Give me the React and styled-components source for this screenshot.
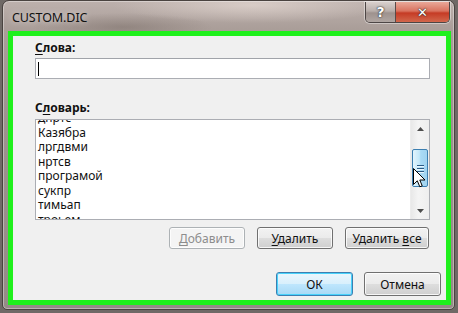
import React from "react"
import styled, { createGlobalStyle } from "styled-components"

const words = ["дпртс", "Казябра", "лргдвми", "нртсв", "програмой", "сукпр", "тимьап", "троьем"]

const GlobalStyle = createGlobalStyle`
  html, body {
    margin: 0;
    padding: 0;
    width: 458px;
    height: 313px;
    overflow: hidden;
    background: #6f6966;
  }
  * { box-sizing: border-box; }
`

const Page = styled.div`
  width: 458px;
  height: 313px;
  padding: 0 3px 3px 2px;
  font-family: "Noto Sans", "Open Sans", sans-serif;
`

const Window = styled.div`
  height: 310px;
  display: flex;
  flex-direction: column;
  border: 1px solid #4a4340;
  border-radius: 7px 7px 5px 5px;
  padding: 0 3px 4px 5px;
  background:
    radial-gradient(ellipse 140px 18px at 250px 4px, rgba(226, 214, 208, 0.75), transparent),
    radial-gradient(ellipse 90px 14px at 120px 26px, rgba(120, 108, 102, 0.5), transparent),
    linear-gradient(180deg, #bdb1ad 0%, #aa9e99 9%, #9d928e 40%, #958b87 100%);
  box-shadow: inset 0 0 0 1px rgba(255, 255, 255, 0.35);
`

const TitleBar = styled.div`
  height: 30px;
  display: flex;
  align-items: flex-start;
  justify-content: space-between;
`

const Title = styled.div`
  padding: 8px 0 0 4px;
  font-size: 12.5px;
  color: #111;
  letter-spacing: -0.1px;
  text-shadow: 0 0 6px rgba(255, 255, 255, 0.7);
`

const Caption = styled.div`
  display: flex;
  margin: 1px 1px 0 0;
  border: 1px solid #4d4645;
  border-top: none;
  border-radius: 0 0 5px 5px;
  overflow: hidden;
  box-shadow: 0 0 0 1px rgba(255, 255, 255, 0.4);
`

const CapButton = styled.div`
  width: ${p => p.$w}px;
  height: 20px;
  display: flex;
  align-items: center;
  justify-content: center;
  font-family: "DejaVu Sans", sans-serif;
  font-weight: bold;
  font-size: ${p => (p.$close ? 13 : 14)}px;
  color: #fff;
  background: ${p =>
    p.$close
      ? "linear-gradient(180deg, #e9a899 0%, #d9735f 45%, #c53b25 55%, #d2674c 100%)"
      : "linear-gradient(180deg, #d9d0cd 0%, #b8aeaa 45%, #9e928e 55%, #b0a6a2 100%)"};
  border-left: ${p => (p.$close ? "1px solid #5a4a48" : "none")};
  text-shadow: 0 0 2px #333, 0 0 1px #000;
`

const Client = styled.div`
  flex: 1;
  border: 5px solid #1ff01c;
  background: #f0f0f0;
  padding: 4px 5px 4px 22px;
  display: flex;
  flex-direction: column;
`

const Label = styled.div`
  font-size: 12px;
  font-weight: bold;
  line-height: 16px;
  color: #111;
  margin-top: ${p => p.$top || 0}px;
  u { text-decoration-thickness: 1px; text-underline-offset: 2px; }
`

const Field = styled.div`
  margin: 2px 11px 0 0;
  height: 21px;
  background: #fff;
  border: 1px solid #abadb3;
  border-top-color: #a0a3a9;
  padding: 3px 2px;
`

const Caret = styled.div`
  width: 1px;
  height: 14px;
  background: #000;
`

const ListBox = styled.div`
  position: relative;
  margin: 3px 11px 0 0;
  height: 101px;
  background: #fff;
  border: 1px solid #abadb3;
  display: flex;
  overflow: hidden;
`

const Items = styled.div`
  flex: 1;
  padding-left: 2px;
  margin-top: -9px;
`

const Item = styled.div`
  font-size: 12px;
  line-height: 14.5px;
  color: #111;
`

const ScrollBar = styled.div`
  width: 19px;
  display: flex;
  flex-direction: column;
  align-items: center;
  background: linear-gradient(90deg, #e8e8e8, #f4f4f4 40%, #eeeeee);
  border-left: 1px solid #ececec;
`

const Arrow = styled.div`
  height: 17px;
  display: flex;
  align-items: center;
  justify-content: center;
`

const Track = styled.div`
  flex: 1;
  width: 100%;
  padding: 12px 1px 0 1px;
`

const Thumb = styled.div`
  height: 38px;
  border: 1px solid #3c7fb1;
  border-radius: 2px;
  background: linear-gradient(90deg, #e3f4fc 0%, #c4e8f9 45%, #a9daf5 55%, #a0d3f0 100%);
  display: flex;
  flex-direction: column;
  align-items: center;
  justify-content: center;
  gap: 2px;
`

const Grip = styled.div`
  width: 7px;
  height: 1px;
  background: #2b5b86;
  box-shadow: 0 1px 0 #e8f6ff;
`

const Cursor = styled.svg`
  position: absolute;
  left: 377px;
  top: 48px;
`

const Row = styled.div`
  display: flex;
  justify-content: flex-end;
  gap: ${p => p.$gap}px;
  margin: ${p => p.$margin};
`

const Button = styled.div`
  width: ${p => p.$w}px;
  height: ${p => p.$h || 22}px;
  display: flex;
  align-items: center;
  justify-content: center;
  font-size: 12px;
  color: ${p => (p.$disabled ? "#8d8d8d" : "#111")};
  border-radius: 3px;
  border: 1px solid ${p => (p.$disabled ? "#adb2b5" : p.$default ? "#3c7fb1" : "#707070")};
  background: ${p =>
    p.$disabled
      ? "#f4f4f4"
      : p.$default
      ? "linear-gradient(180deg, #eaf6fd 0%, #d9f0fc 48%, #bee6fd 52%, #a7d9f5 100%)"
      : "linear-gradient(180deg, #f2f2f2 0%, #ebebeb 48%, #dddddd 52%, #cfcfcf 100%)"};
  box-shadow: inset 0 0 0 1px ${p => (p.$default ? "#48d2fb" : "rgba(255,255,255,0.8)")};
  u { text-decoration-thickness: 1px; text-underline-offset: 2px; }
`

export default function App() {
  return (
    <>
      <GlobalStyle />
      <Page>
        <Window>
          <TitleBar>
            <Title>CUSTOM.DIC</Title>
            <Caption>
              <CapButton $w={29}>?</CapButton>
              <CapButton $w={54} $close>✕</CapButton>
            </Caption>
          </TitleBar>
          <Client>
            <Label><u>С</u>лова:</Label>
            <Field><Caret /></Field>
            <Label $top={21}>С<u>л</u>оварь:</Label>
            <ListBox>
              <Items>
                {words.map(w => (
                  <Item key={w}>{w}</Item>
                ))}
              </Items>
              <ScrollBar>
                <Arrow>
                  <svg width="7" height="4" viewBox="0 0 7 4"><path d="M0 4 L3.5 0 L7 4 Z" fill="#4d4d4d" /></svg>
                </Arrow>
                <Track>
                  <Thumb>
                    <Grip />
                    <Grip />
                    <Grip />
                  </Thumb>
                </Track>
                <Arrow>
                  <svg width="7" height="4" viewBox="0 0 7 4"><path d="M0 0 L3.5 4 L7 0 Z" fill="#4d4d4d" /></svg>
                </Arrow>
              </ScrollBar>
              <Cursor width="13" height="21" viewBox="0 0 13 21">
                <path
                  d="M0.5 0.5 L0.5 16.5 L4.3 12.8 L6.8 18.8 L9.2 17.8 L6.8 12 L12 12 Z"
                  fill="#fff"
                  stroke="#000"
                  strokeWidth="1"
                  strokeLinejoin="miter"
                />
              </Cursor>
            </ListBox>
            <Row $gap={12} $margin="7px 12px 0 0">
              <Button $w={76} $disabled><span><u>Д</u>обавить</span></Button>
              <Button $w={76}><span><u>У</u>далить</span></Button>
              <Button $w={84}><span>Удалить <u>в</u>се</span></Button>
            </Row>
            <Row $gap={11} $margin="23px 0 0 0">
              <Button $w={77} $h={24} $default>ОК</Button>
              <Button $w={77} $h={24}>Отмена</Button>
            </Row>
          </Client>
        </Window>
      </Page>
    </>
  )
}
